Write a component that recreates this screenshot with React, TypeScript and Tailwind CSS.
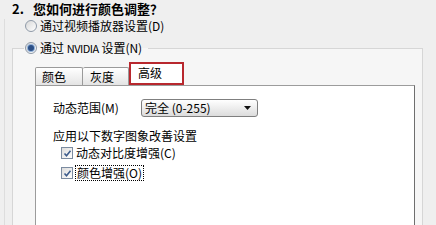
import React from "react";

function Radio({ checked }: { checked?: boolean }) {
  return (
    <span className="relative flex h-[12px] w-[12px] shrink-0 items-center justify-center rounded-full border border-[#8f9aa8] bg-gradient-to-br from-[#d8d8d8] to-white">
      {checked && <span className="h-[6px] w-[6px] rounded-full bg-[#2c4f86] shadow-[0_0_0_1px_#8fb0d8]" />}
    </span>
  );
}

function Check() {
  return (
    <span className="flex h-[12px] w-[12px] shrink-0 items-center justify-center border border-[#7b8ba0] bg-gradient-to-br from-[#dcdcdc] to-white">
      <svg width="9" height="9" viewBox="0 0 9 9">
        <path d="M1.5 4.5 L3.5 6.8 L7.5 1.8" fill="none" stroke="#3d5c8c" strokeWidth="1.6" />
      </svg>
    </span>
  );
}

export default function App() {
  return (
    <div className="h-[225px] w-[436px] overflow-hidden bg-[#efefef] text-[12px] leading-[14px] text-black font-['Noto_Sans_CJK_SC','Liberation_Sans',sans-serif]">
      <div className="flex h-[18px] items-center pl-[12px] text-[13px] font-bold">
        <span className="w-[21px]">2.</span>
        <span>您如何进行颜色调整？</span>
      </div>

      <div className="ml-[4px] h-[207px] border-l border-[#dddddd]">
        <div className="ml-[20px] mt-[1px] flex h-[14px] items-center gap-[3px]">
          <Radio />
          <span>通过视频播放器设置(D)</span>
        </div>

        <fieldset className="ml-[7px] mt-[8px] h-[220px] w-[411px] border border-[#d6d6d6] bg-[#f6f6f6]">
          <legend className="ml-[11px] px-[1px] pr-[6px]">
            <span className="flex h-[14px] items-center gap-[3px]">
              <Radio checked />
              <span>
                通过 <span className="text-[11px] tracking-[-0.5px]">NVIDIA</span> 设置(N)
              </span>
            </span>
          </legend>

          <div className="ml-[22px] mt-[7px] flex h-[23px] items-end">
            <div className="flex h-[18px] w-[48px] items-center rounded-t-[2px] border border-b-0 border-[#9a9a9a] bg-gradient-to-b from-white to-[#e4e4e4] pl-[6px]">
              颜色
            </div>
            <div className="flex h-[18px] w-[46px] items-center rounded-t-[2px] border border-b-0 border-l-0 border-[#9a9a9a] bg-gradient-to-b from-white to-[#e4e4e4] pl-[7px]">
              灰度
            </div>
            <div className="relative z-10 flex h-[23px] w-[55px] items-center border-2 border-[#b8282e] bg-white pl-[7px] pb-[2px]">
              高级
            </div>
          </div>

          <div className="ml-[22px] h-[160px] w-[380px] border border-[#9c9c9c] border-r-[#6f6f6f] bg-white pl-[17px] pt-[13px]">
            <div className="flex h-[18px] items-center">
              <span className="w-[88px]">动态范围(M)</span>
              <div className="flex h-[18px] w-[117px] items-center justify-between rounded-[3px] border border-[#7f7f7f] bg-gradient-to-b from-white to-[#dcdcdc] pl-[3px] pr-[6px]">
                <span>完全 (0-255)</span>
                <svg width="7" height="4" viewBox="0 0 7 4">
                  <path d="M0 0 H7 L3.5 4 Z" fill="#111" />
                </svg>
              </div>
            </div>

            <div className="mt-[12px] h-[14px]">应用以下数字图象改善设置</div>

            <div className="ml-[8px] flex h-[20px] items-center gap-[3px]">
              <Check />
              <span>动态对比度增强(C)</span>
            </div>
            <div className="ml-[8px] flex h-[20px] items-center gap-[2px]">
              <Check />
              <span className="border border-dotted border-black px-[1px]">颜色增强(O)</span>
            </div>
          </div>
        </fieldset>
      </div>
    </div>
  );
}
